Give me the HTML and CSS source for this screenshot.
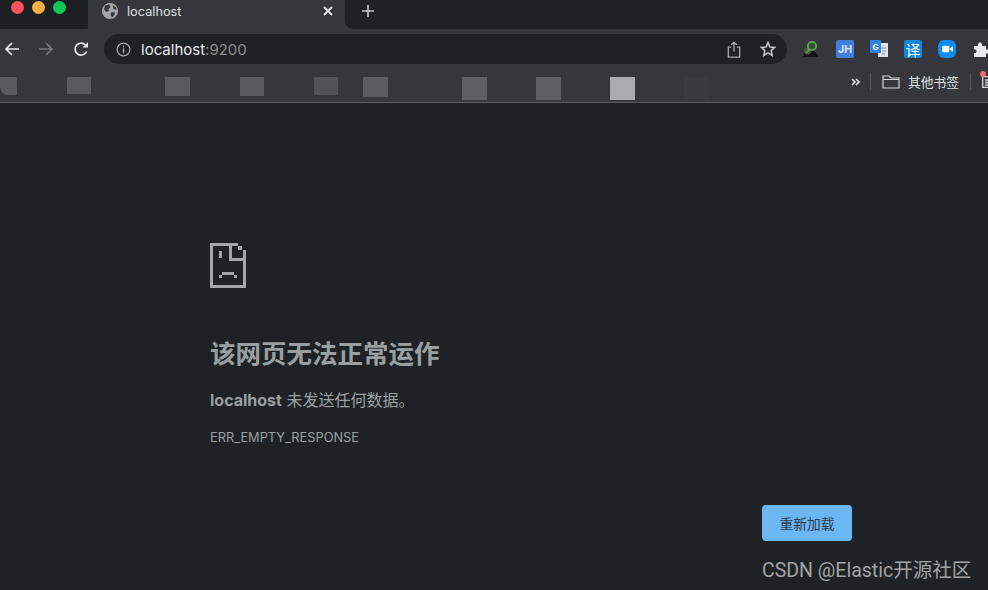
FILE: index.html
```html
<!DOCTYPE html>
<html lang="zh">
<head>
<meta charset="utf-8">
<title>localhost</title>
<link rel="stylesheet" href="styles.css">
</head>
<body>
<div class="chrome">
  <div class="tabstrip">
    <div class="traffic">
      <span class="dot red"></span><span class="dot yellow"></span><span class="dot green"></span>
    </div>
    <div class="tab">
      <svg class="globe" viewBox="0 0 16 16"><circle cx="8" cy="8" r="8" fill="#a3a6ab"/><path d="M3 2.500 7 1.500 8.500 4 6.500 6 7 8 4.500 9 2 6.500ZM9 9.500 12.500 9 13 11.500 10 14.500 8.500 12ZM10.500 2 14 4.500 14.500 7 11.500 6Z" fill="#35373c"/></svg>
      <span class="tab-title">localhost</span>
      <svg class="tab-close" viewBox="0 0 10 10"><path d="M1 1 9 9M9 1 1 9" stroke="#e8eaed" stroke-width="1.800"/></svg>
    </div>
    <div class="tab-after">
      <svg class="new-tab" viewBox="0 0 14 14"><path d="M7 1V13M1 7H13" stroke="#c4c7cc" stroke-width="1.600"/></svg>
    </div>
  </div>
  <div class="toolbar">
    <svg class="nav back" viewBox="0 0 16 16"><path d="M15 8H2M8 2 2 8l6 6" fill="none" stroke="#e8eaed" stroke-width="1.700"/></svg>
    <svg class="nav forward" viewBox="0 0 16 16"><path d="M1 8H14M8 2l6 6-6 6" fill="none" stroke="#75787c" stroke-width="1.700"/></svg>
    <svg class="nav reload" viewBox="0 0 16 16"><path d="M13.600 10.500A6 6 0 1 1 12.500 4L14 5.500" fill="none" stroke="#e8eaed" stroke-width="1.700"/><path d="M15 1V6.500H9.500Z" fill="#e8eaed"/></svg>
    <div class="omnibox">
      <svg class="info" viewBox="0 0 16 16"><circle cx="8" cy="8" r="6.800" fill="none" stroke="#a6a9ad" stroke-width="1.300"/><path d="M8 7V12M8 4V5.600" stroke="#a6a9ad" stroke-width="1.500"/></svg>
      <span class="url">localhost<span class="port">:9200</span></span>
      <svg class="share" viewBox="0 0 14 18"><path d="M4 6.500H1V17H13V6.500H10M7 11.500V1.500M4 4 7 1.500 10 4" fill="none" stroke="#a6a9ad" stroke-width="1.400"/></svg>
      <svg class="star" viewBox="0 0 16 16"><path d="M8 1.500 9.900 6 14.800 6.400 11.100 9.600 12.200 14.400 8 11.900 3.800 14.400 4.900 9.600 1.200 6.400 6.100 6Z" fill="none" stroke="#c4c7cc" stroke-width="1.500"/></svg>
    </div>
    <div class="extensions">
      <svg class="ext" viewBox="0 0 18 18"><path d="M1 17 3 11H12L16 15V17Z" fill="#121416"/><circle cx="5.500" cy="11" r="3.500" fill="#50544f"/><path d="M7.500 9 4 13" stroke="#4f9b48" stroke-width="2"/><circle cx="10" cy="6" r="4.200" fill="#3a4a3e" stroke="#5aa84f" stroke-width="1.800"/></svg>
      <div class="ext-tile jh">JH</div>
      <svg class="ext" viewBox="0 0 18 18"><rect x="8" y="3" width="10" height="14" fill="#dfe3e6"/><path d="M11 8H16M12 11H16M12 14H15" stroke="#7d8c96"/><rect x="0" y="0" width="11" height="13" fill="#2f84e0"/><text class="g-letter" x="5.500" y="9.500" text-anchor="middle">G</text></svg>
      <div class="ext-tile yi">译</div>
      <div class="ext-tile zoom">
        <svg viewBox="0 0 12 8" class="zoom-cam"><rect x="0" y="0.500" width="8" height="7" rx="1.500" fill="#fff"/><path d="M8.500 3.500 12 1V7L8.500 4.500Z" fill="#fff"/></svg>
      </div>
      <svg class="puzzle" viewBox="0 0 16 16"><path d="M1 5H5V3.500A2 2 0 0 1 9 3.500V5H13V8.500H14.500A2 2 0 0 1 14.500 12.500H13V16H1V12H2.500A2 2 0 0 0 2.500 8.500H1Z" fill="#e8eaed"/></svg>
    </div>
  </div>
  <div class="bookmarks">
    <div class="blur-row">
      <span class="blot first"></span>
      <span class="blot b2"></span>
      <span class="blot b3"></span>
      <span class="blot b4"></span>
      <span class="blot b5"></span>
      <span class="blot b6"></span>
      <span class="blot b7 tall"></span>
      <span class="blot b8 tall"></span>
      <span class="blot b8 tall bright"></span>
      <span class="blot b8 faint"></span>
    </div>
    <div class="bm-right">
      <svg class="chevrons" viewBox="0 0 9 8"><path d="M1 1 4 4 1 7M5 1 8 4 5 7" fill="none" stroke="#e8eaed" stroke-width="1.600"/></svg>
      <span class="sep"></span>
      <svg class="folder" viewBox="0 0 18 14"><path d="M1 13V1H7L9 3H17V13ZM1 4.500H17" fill="none" stroke="#d5d7da" stroke-width="1.200"/></svg>
      <span class="bm-label">其他书签</span>
      <span class="sep"></span>
      <span class="reading">
        <svg class="reading-icon" viewBox="0 0 6 12"><path d="M6 .7H.7V11.300H6M3 4H6M3 6.500H6M3 9H6" fill="none" stroke="#d5d7da" stroke-width="1.300"/></svg>
        <span class="badge"></span>
      </span>
    </div>
  </div>
</div>
<main class="page">
  <div class="error">
    <svg class="sad" viewBox="0 0 36 45" shape-rendering="crispEdges" fill="#a3a6aa">
      <rect x="0" y="0" width="3" height="45"/>
      <rect x="0" y="42" width="36" height="3"/>
      <rect x="0" y="0" width="28" height="3"/>
      <rect x="28" y="3" width="4" height="4"/>
      <rect x="33" y="7" width="3" height="38"/>
      <rect x="19" y="0" width="3" height="18"/>
      <rect x="19" y="15" width="17" height="3"/>
      <rect x="9" y="8" width="3" height="7"/>
      <rect x="12" y="29" width="12" height="3"/>
      <rect x="9" y="32" width="3" height="3"/>
      <rect x="24" y="32" width="3" height="3"/>
    </svg>
    <h1 class="title">该网页无法正常运作</h1>
    <p class="message"><strong>localhost</strong> 未发送任何数据。</p>
    <p class="code">ERR_EMPTY_RESPONSE</p>
  </div>
  <div class="actions">
    <button class="reload-btn">重新加载</button>
  </div>
  <div class="watermark">CSDN @Elastic开源社区</div>
</main>
</body>
</html>
```
FILE: styles.css
```css
* { box-sizing: border-box; }
html, body { margin: 0; height: 100%; overflow: hidden; }
body {
  width: 988px;
  height: 590px;
  background: #1e2225;
  font-family: Inter, "Noto Sans CJK SC", sans-serif;
  display: flex;
  flex-direction: column;
}
.chrome { flex: none; background: #35373c; border-bottom: 1px solid #5c5f63; height: 103px; }

.tabstrip { height: 29px; background: #1e2225; display: flex; }
.traffic { width: 88px; display: flex; gap: 8px; padding: 1px 0 0 11px; background: #1c1f22; border-radius: 0 0 8px 0; }
.dot { width: 13px; height: 13px; border-radius: 50%; }
.red { background: #f9525a; }
.yellow { background: #f9ae47; }
.green { background: #10c657; }
.tab { width: 257px; background: #35373c; display: flex; align-items: center; padding: 0 12px 7px 14px; }
.globe { width: 16px; height: 16px; flex: none; }
.tab-title { color: #dfe1e4; font-size: 12.750px; margin-left: 9px; flex: 1; }
.tab-close { width: 10px; height: 10px; }
.tab-after { flex: 1; background: #1e2225; border-radius: 0 0 0 8px; box-shadow: -8px 0 0 #35373c; display: flex; align-items: flex-start; padding: 4px 0 0 16px; }
.new-tab { width: 14px; height: 14px; }

.toolbar { height: 40px; display: flex; align-items: center; padding: 0 0 0 4px; overflow: hidden; }
.nav { width: 16px; height: 16px; flex: none; }
.forward { margin-left: 18px; }
.reload { margin-left: 19px; }
.omnibox {
  flex: none;
  margin-left: 15px;
  width: 683px;
  height: 30px;
  border-radius: 15px;
  background: #1e2225;
  display: flex;
  align-items: center;
  padding: 0 12px;
}
.info { width: 15px; height: 15px; flex: none; }
.url { margin-left: 10px; font-size: 15px; color: #e8eaed; flex: 1; }
.port { color: #8b8e92; }
.share { width: 14px; height: 17px; margin-right: 19px; }
.star { width: 16px; height: 16px; margin-right: -1px; }
.extensions { margin-left: 15px; display: flex; align-items: center; gap: 16px; flex: none; }
.ext { width: 18px; height: 18px; flex: none; }
.ext-tile { width: 18px; height: 18px; border-radius: 2px; color: #fff; display: flex; align-items: center; justify-content: center; flex: none; }
.jh { background: #3f7fd9; color: #d9e6f8; font-size: 10.500px; font-weight: bold; }
.yi { background: #0f86dc; font-size: 15px; }
.zoom { background: #0e8cf2; border-radius: 6px; }
.zoom-cam { width: 11px; height: 8px; }
.g-letter { font: bold 8px Inter, sans-serif; fill: #fff; }
.puzzle { width: 16px; height: 16px; flex: none; margin-left: 1px; }

.bookmarks { height: 33px; display: flex; align-items: flex-start; justify-content: space-between; }
.blur-row { display: flex; align-items: flex-start; padding-top: 8px; }
.blot { display: block; width: 25px; height: 19px; background: #59595f; }
.first { width: 17px; height: 18px; border-radius: 0 0 0 8px; }
.b2 { margin-left: 50px; width: 24px; height: 17px; }
.b3 { margin-left: 74px; }
.b4 { margin-left: 50px; width: 24px; }
.b5 { margin-left: 50px; width: 24px; height: 18px; background: #525358; }
.b6 { margin-left: 25px; height: 20px; background: #5c5d62; }
.b7 { margin-left: 74px; }
.b8 { margin-left: 49px; }
.tall { height: 23px; background: #5e5f64; }
.bright { background: #a8abb0; }
.faint { background: #3a3b40; height: 23px; }
.bm-right { display: flex; align-items: center; height: 25px; }
.chevrons { width: 9px; height: 8px; margin-right: 10px; }
.sep { width: 1px; height: 17px; background: #55585c; }
.folder { width: 18px; height: 14px; margin-left: 11px; }
.bm-label { color: #dfe1e4; font-size: 12.750px; margin-left: 8px; margin-right: 11px; white-space: nowrap; }
.reading { position: relative; display: block; width: 6px; height: 12px; margin-left: 11px; }
.reading-icon { width: 6px; height: 12px; display: block; }
.badge { position: absolute; left: -2px; top: -5px; width: 6px; height: 6px; border-radius: 50%; background: #f9686c; }

.page { flex: 1; position: relative; padding: 140px 0 0 210px; }
.error { width: 500px; }
.sad { width: 36px; height: 45px; display: block; }
.title { margin: 48px 0 0; color: #9aa0a0; font-size: 25.500px; line-height: 36px; font-weight: bold; white-space: nowrap; }
.message { margin: 16px 0 0; color: #9aa0a0; font-size: 16px; line-height: 24px; }
.code { margin: 18px 0 0; color: #9aa0a6; font-size: 12.800px; line-height: 16px; }
.actions { position: absolute; left: 762px; top: 402px; }
.reload-btn {
  width: 90px;
  height: 36px;
  border: 0;
  border-radius: 4px;
  background: #6ab7f4;
  color: #2a3a48;
  font: 13.750px Inter, "Noto Sans CJK SC", sans-serif;
  padding: 0;
}
.watermark { position: absolute; left: 762px; top: 455px; color: #a3a3a3; font-size: 19.500px; line-height: 26px; white-space: nowrap; font-family: Roboto, "Noto Sans CJK SC", sans-serif; }
```
